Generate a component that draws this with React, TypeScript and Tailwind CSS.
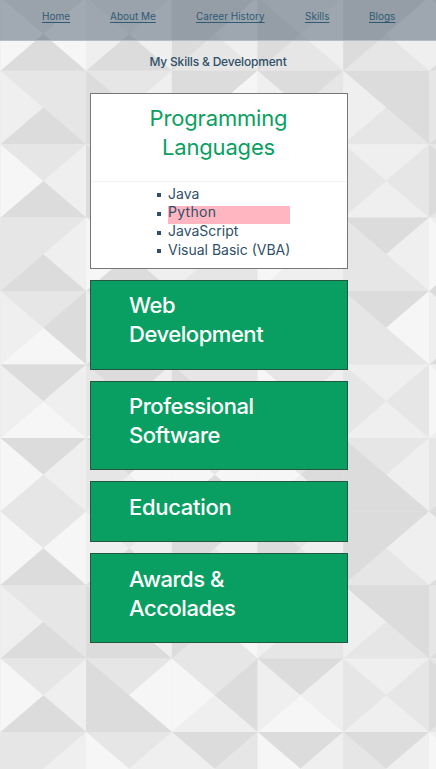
const tones: Record<string, string> = {
  A: '#dcdcdc',
  B: '#e6e6e6',
  C: '#efefef',
  D: '#f6f6f6',
};

// Each tile lists its top, right, bottom and left facets.
const pattern = [
  ['BDAD', 'BCAC', 'ACBA', 'BCBA', 'ACBA', 'ACAC'],
  ['BBAC', 'BCAA', 'ADBA', 'ABBC', 'AABC', 'BBAB'],
  ['BCAD', 'BDAA', 'BACD', 'ACDC', 'CBCB', 'BBBA'],
  ['BCAB', 'BCAD', 'ABBC', 'ACCD', 'ACBB', 'CBAD'],
  ['BADC', 'BCAC', 'BABA', 'ACBD', 'ADBB', 'ABAC'],
  ['ACDC', 'ACDB', 'BBAA', 'BCAD', 'CBCB', 'CBCD'],
  ['ACBD', 'ADCB', 'BDAD', 'BACD', 'BCAA', 'BBAB'],
];

const W = 85.72;
const H = 73.47;

function Backdrop() {
  const rows = [...pattern, ...pattern.slice(0, 4)];
  return (
    <svg className="absolute inset-0 h-full w-full" viewBox="0 0 436 769" preserveAspectRatio="none" aria-hidden="true">
      <rect width="436" height="769" fill="#e9e9e9" />
      {rows.map((row, r) =>
        row.map((tile, c) => {
          const x = 0.4 + c * W;
          const y = -2.8 + r * H;
          const m = `${x + W / 2},${y + H / 2}`;
          const p = [`${x},${y}`, `${x + W},${y}`, `${x + W},${y + H}`, `${x},${y + H}`];
          return p.map((pt, i) => (
            <polygon key={`${r}-${c}-${i}`} points={`${pt} ${p[(i + 1) % 4]} ${m}`} fill={tones[tile[i]]} />
          ));
        }),
      )}
    </svg>
  );
}

const links = [
  { label: 'Home', size: 'w-[28px]' },
  { label: 'About Me', size: 'w-[46px]' },
  { label: 'Career History', size: 'w-[69px]' },
  { label: 'Skills', size: 'w-[24px]' },
  { label: 'Blogs', size: 'w-[26px]' },
];

const cards = [
  { lines: ['Web', 'Development'], size: 'h-[89.7px]', tracking: 'tracking-[-0.45px]' },
  { lines: ['Professional', 'Software'], size: 'h-[89.7px]', tracking: 'tracking-[-0.45px]' },
  { lines: ['Education'], size: 'h-[61px]', tracking: 'tracking-[-0.3px]' },
  { lines: ['Awards &', 'Accolades'], size: 'h-[90px]', tracking: 'tracking-[-0.45px]' },
];

const bullet =
  "before:-ml-[11px] before:mr-[7px] before:inline-block before:size-1 before:bg-[#2f5068] before:align-middle before:content-['']";

export default function App() {
  return (
    <div className="relative h-[769px] w-full overflow-hidden font-[Inter,sans-serif] text-[#2f5068]">
      <Backdrop />
      <div className="relative flex flex-col">
        <nav className="flex h-[41px] justify-center gap-10 border-b border-[#b3bcc9] bg-[rgba(89,105,122,0.54)] pl-[1px] pt-[9px]">
          {links.map((l) => (
            <a key={l.label} href="#" className={`${l.size} whitespace-nowrap text-[10px] leading-[15px] text-[#2f5a73] underline underline-offset-2`}>
              {l.label}
            </a>
          ))}
        </nav>
        <h1 className="mt-[13px] text-center text-[12px] font-medium leading-4 tracking-[-0.18px]">My Skills &amp; Development</h1>

        <main className="ml-[90px] mt-[23px] flex w-[258px] flex-col gap-[11px]">
          <section className="h-[176px] border border-[#777] bg-white">
            <h2 className="h-[88px] border-b border-[#f3f3f3] pr-px pt-[10px] text-center text-[22px] leading-[29px] tracking-[-0.17px] text-[#0a9f62]">
              Programming
              <br />
              Languages
            </h2>
            <ul className="ml-[77px] mt-[3px] w-[122px] whitespace-nowrap text-[14px] leading-[18.7px]">
              <li className={bullet}>Java</li>
              <li className={`${bullet} bg-[linear-gradient(transparent_2px,#ffb6c1_2px)] shadow-[0_2px_0_#ffb6c1]`}>
                <span className="relative -top-px tracking-[0.3px]">Python</span>
              </li>
              <li className={bullet}>JavaScript</li>
              <li className={bullet}>Visual Basic (VBA)</li>
            </ul>
          </section>
          {cards.map((card) => (
            <section key={card.lines[0]} className={`${card.size} border border-[#24573f] bg-[#0a9f62] pl-[38px] pt-[10.4px]`}>
              <h2 className={`${card.tracking} text-[22px] font-medium leading-[28.8px] text-white`}>
                {card.lines.map((line) => (
                  <span key={line} className="block">{line}</span>
                ))}
              </h2>
            </section>
          ))}
        </main>
      </div>
    </div>
  );
}
